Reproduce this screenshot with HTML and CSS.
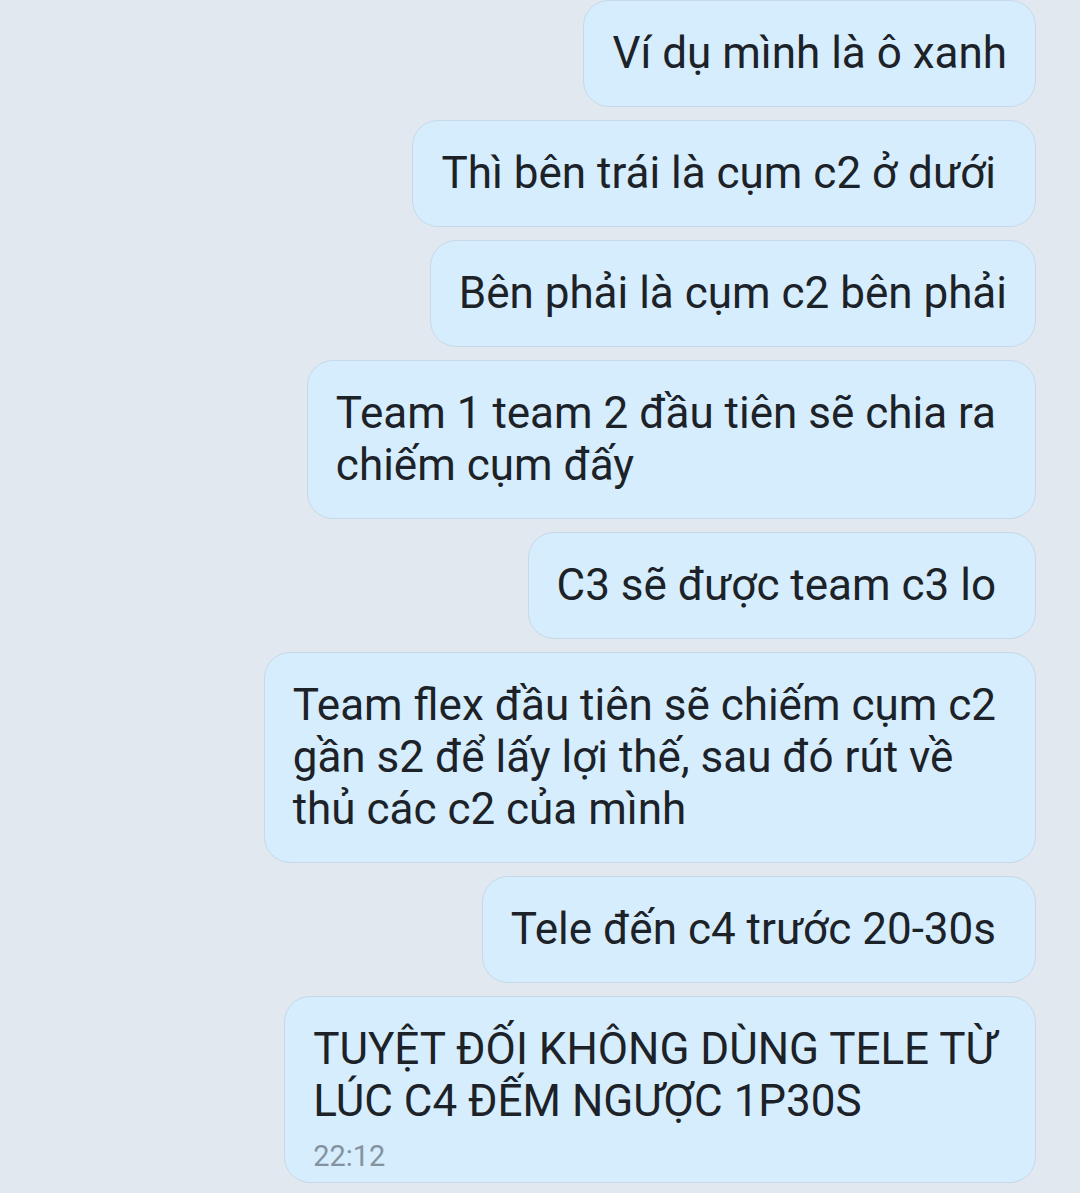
FILE: index.html
```html
<!DOCTYPE html>
<html lang="vi">
<head>
<meta charset="utf-8">
<link rel="stylesheet" href="styles.css">
</head>
<body>
<div class="chat">
  <div class="bubble">Ví dụ mình là ô xanh</div>
  <div class="bubble sp">Thì bên trái là cụm c2 ở dưới</div>
  <div class="bubble">Bên phải là cụm c2 bên phải</div>
  <div class="bubble sp">Team 1 team 2 đầu tiên sẽ chia ra<br>chiếm cụm đấy</div>
  <div class="bubble sp">C3 sẽ được team c3 lo</div>
  <div class="bubble sp">Team flex đầu tiên sẽ chiếm cụm c2<br>gần s2 để lấy lợi thế, sau đó rút về<br>thủ các c2 của mình</div>
  <div class="bubble sp">Tele đến c4 trước 20-30s</div>
  <div class="bubble sp last">TUYỆT ĐỐI KHÔNG DÙNG TELE TỪ<br>LÚC C4 ĐẾM NGƯỢC 1P30S<span class="time">22:12</span></div>
</div>
</body>
</html>
```
FILE: styles.css
```css
html, body {
  margin: 0;
  padding: 0;
  background: #e2e8f0;
}
body {
  width: 1080px;
  height: 1193px;
  overflow: hidden;
  font-family: Roboto, "Noto Sans", sans-serif;
}
.chat {
  display: flex;
  flex-direction: column;
  align-items: flex-end;
  gap: 13px;
  padding: 0 44px 0 0;
}
.bubble {
  background: #d5edfc;
  border: 1px solid #c6d9e8;
  border-radius: 26px;
  padding: 26px 28px 27px 28px;
  font-size: 44px;
  line-height: 52px;
  color: #1c2228;
  white-space: nowrap;
}
.bubble.sp {
  padding-right: 39px;
}
.bubble.last {
  padding-bottom: 8px;
}
.time {
  display: block;
  font-size: 29px;
  line-height: 36px;
  color: #8593a0;
  margin-top: 11px;
}
```
